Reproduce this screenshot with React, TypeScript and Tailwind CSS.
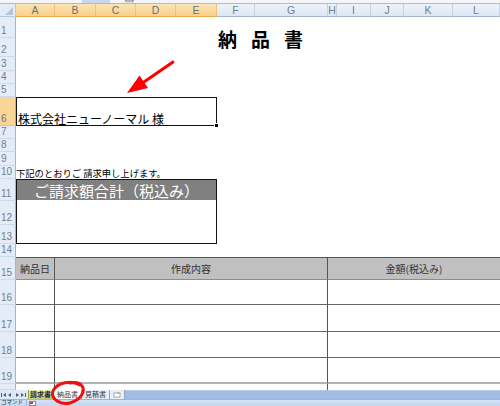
import React from "react";

const jp = "font-['Noto_Sans_CJK_JP','Noto_Sans_CJK_SC',sans-serif]";

const columns = [
  { label: "A", width: "w-[39px]", selected: true },
  { label: "B", width: "w-[41px]", selected: true },
  { label: "C", width: "w-[40px]", selected: true },
  { label: "D", width: "w-[40px]", selected: true },
  { label: "E", width: "w-[41px]", selected: true },
  { label: "F", width: "w-[38px]" },
  { label: "G", width: "w-[73px]" },
  { label: "H", width: "w-[9px]" },
  { label: "I", width: "w-[34px]" },
  { label: "J", width: "w-[33px]" },
  { label: "K", width: "w-[49px]" },
  { label: "L", width: "w-[47px]" },
];

const rows = [
  { label: "1", height: "h-[21px]" },
  { label: "2", height: "h-[19px]" },
  { label: "3", height: "h-[14px]" },
  { label: "4", height: "h-[13px]" },
  { label: "5", height: "h-[13px]" },
  { label: "6", height: "h-[29px]", selected: true },
  { label: "7", height: "h-[13px]" },
  { label: "8", height: "h-[13px]" },
  { label: "9", height: "h-[14px]" },
  { label: "10", height: "h-[13px]" },
  { label: "11", height: "h-[22px]" },
  { label: "12", height: "h-[24px]" },
  { label: "13", height: "h-[19px]" },
  { label: "14", height: "h-[13px]" },
  { label: "15", height: "h-[23px]" },
  { label: "16", height: "h-[25px]" },
  { label: "17", height: "h-[27px]" },
  { label: "18", height: "h-[26px]" },
  { label: "19", height: "h-[26px]" },
  { label: "", height: "h-[6px]" },
];

// table body rows 16..20
const tableRows = [
  { row: "row-start-16", line: "border-b border-b-[#666]" },
  { row: "row-start-17", line: "border-b border-b-[#666]" },
  { row: "row-start-18", line: "border-b border-b-[#666]" },
  { row: "row-start-19", line: "border-b-2 border-b-[#b3b3b3]" },
  { row: "row-start-20", line: "" },
];

function ColumnHeaders() {
  return (
    <div className="flex h-[13px] font-['Liberation_Sans',sans-serif] text-[10.5px] leading-none">
      <div className="relative w-[16px] border-r border-b border-[#b7c8dd] bg-[#e4ecf7]">
        <svg className="absolute inset-0" width="16" height="13" viewBox="0 0 16 13">
          <polygon points="13,3 13,11 5,11" fill="#b3c5db" />
        </svg>
      </div>
      {columns.map((c) => (
        <div
          key={c.label}
          className={
            c.width +
            " flex items-center justify-center overflow-hidden border-r border-b " +
            (c.selected
              ? "border-r-[#eec27e] border-b-[#eaa94a] bg-linear-to-b from-[#fbe4b6] to-[#f8d08a] text-[#6b6f78]"
              : "border-r-[#c3d2e4] border-b-[#9eb6ce] bg-linear-to-b from-[#eef3fa] to-[#dde6f2] text-[#6e7f96]")
          }
        >
          {c.label}
        </div>
      ))}
    </div>
  );
}

function RowHeaders() {
  return (
    <div className="flex w-[16px] flex-col font-['Liberation_Sans',sans-serif] text-[10px] leading-none">
      {rows.map((r, i) => (
        <div
          key={i}
          className={
            r.height +
            " flex items-end overflow-hidden border-r border-b pl-[1px] pb-[1px] " +
            (r.selected
              ? "border-r-[#eaa94a] border-b-[#eec27e] bg-[#f9d697] text-[#6b6f78]"
              : "border-r-[#9eb6ce] border-b-[#cfdbea] bg-[#e4ecf7] text-[#6e7f96]")
          }
        >
          {r.label}
        </div>
      ))}
    </div>
  );
}

function Sheet() {
  return (
    <div
      className={
        jp +
        " grid flex-1 grid-cols-[39px_41px_40px_40px_41px_38px_73px_9px_34px_33px_49px_47px] grid-rows-[21px_19px_14px_13px_13px_29px_13px_13px_14px_13px_22px_24px_19px_13px_23px_25px_27px_26px_26px_6px] bg-white text-black"
      }
    >
      {/* title */}
      <div className="col-span-12 col-start-1 row-span-2 row-start-1 flex gap-[14px] pl-[202px] pt-[12px] text-[19px] font-bold leading-none">
        <span>納</span>
        <span>品</span>
        <span>書</span>
      </div>

      {/* addressee */}
      <div className="relative col-span-5 col-start-1 row-start-6 flex items-end whitespace-nowrap border-[1.5px] border-[#111] pl-[1px] text-[12px] leading-none">
        株式会社ニューノーマル 様
        <span className="absolute -right-[3px] -bottom-[3px] h-[5px] w-[5px] border border-white bg-black" />
      </div>

      <div className="col-span-12 col-start-1 row-start-10 flex items-end whitespace-nowrap pb-[1px] text-[9.3px] leading-none">
        下記のとおりご 請求申し上げます。
      </div>

      {/* total box */}
      <div className="col-span-5 col-start-1 row-span-3 row-start-11 flex flex-col border-[1.5px] border-[#111]">
        <div className="flex h-[20px] items-center justify-center bg-[#808080] text-[15px] leading-none text-white">
          ご請求額合計（税込み）
        </div>
      </div>

      {/* table header */}
      <div className="col-start-1 row-start-15 flex items-center justify-center border-y border-r border-t-[#555] border-b-[#8c8c8c] border-r-[#555] bg-[#c0c0c0] text-[10px] leading-none text-[#333]">
        納品日
      </div>
      <div className="col-span-6 col-start-2 row-start-15 flex items-center justify-center border-y border-r border-t-[#555] border-b-[#8c8c8c] border-r-[#555] bg-[#c0c0c0] text-[10px] leading-none text-[#333]">
        作成内容
      </div>
      <div className="col-span-5 col-start-8 row-start-15 flex items-center justify-center border-y border-t-[#555] border-b-[#8c8c8c] bg-[#c0c0c0] text-[10px] leading-none text-[#333]">
        金額(税込み)
      </div>

      {tableRows.map((t) => (
        <React.Fragment key={t.row}>
          <div className={t.row + " col-start-1 border-r border-r-[#555] " + t.line} />
          <div className={t.row + " col-span-6 col-start-2 border-r border-r-[#555] " + t.line} />
          <div className={t.row + " col-span-5 col-start-8 " + t.line} />
        </React.Fragment>
      ))}
    </div>
  );
}

function SheetTabs() {
  return (
    <div className={jp + " flex h-[9px] whitespace-nowrap text-[7px] leading-none"}>
      <div className="flex w-[28px] items-center bg-[#dfe8f5]">
        <svg width="28" height="9" viewBox="0 0 28 9">
          <rect x="1" y="3" width="1" height="4" fill="#44608a" />
          <polygon points="6,3 6,7 3,5" fill="#44608a" />
          <polygon points="11,3 11,7 8,5" fill="#44608a" />
          <polygon points="16,3 16,7 19,5" fill="#44608a" />
          <polygon points="21,3 21,7 24,5" fill="#44608a" />
          <rect x="25" y="3" width="1" height="4" fill="#44608a" />
        </svg>
      </div>
      <div className="flex w-[25px] items-center border-r border-[#9eb6ce] bg-linear-to-b from-[#e8efb8] to-[#c2d37f] font-bold text-[#223]">
        <span className="mr-[1px] h-full w-[1px] bg-[#8aab3a]" />
        請求書
      </div>
      <div className="flex w-[29px] items-center justify-center border-x border-[#7a96bd] bg-white text-[#333]">
        納品書
      </div>
      <div className="flex w-[28px] items-center justify-center border-r border-[#8ea7c9] bg-[#e6eef9] text-[#333]">
        見積書
      </div>
      <div className="flex w-[15px] items-center justify-center border-r border-[#8ea7c9] bg-[#e6eef9]">
        <svg width="8" height="6" viewBox="0 0 8 6">
          <rect x="1" y="1" width="6" height="4" fill="#fff" stroke="#8a98a8" strokeWidth="0.8" />
          <rect x="4" y="0" width="3" height="2" fill="#f2b233" />
        </svg>
      </div>
      <div className="flex-1 border-t border-[#b5c9e6] bg-[#a1bce2]" />
    </div>
  );
}

function StatusBar() {
  return (
    <div className={jp + " flex h-[7px] items-center overflow-hidden border-t border-[#9db6d8] bg-linear-to-b from-[#d4e2f4] to-[#c3d6ef] text-[5.5px] leading-none text-[#1f2f46]"}>
      <span className="pl-[1px]">コマンド</span>
      <span className="ml-[3px] h-full w-[1px] bg-[#9db6d8]" />
      <span className="ml-[2px] h-[5px] w-[7px] border border-[#7a8ea8] bg-white">
        <span className="block h-[2px] w-[3px] bg-[#d23a2a]" />
      </span>
    </div>
  );
}

export default function App() {
  return (
    <div className="relative h-[406px] w-[500px] overflow-hidden bg-white">
      {/* top edge of the formula bar */}
      <div className={jp + " flex h-[4px] items-center overflow-hidden border-b border-[#aabdd6] bg-[#f3f5f8]"}>
        <div className="ml-[82px] h-full w-[28px] bg-[#c8d8ee]" />
        <span className="ml-[15px] text-[3px] leading-none text-[#444]">納品書</span>
      </div>

      <ColumnHeaders />

      <div className="flex h-[373px]">
        <RowHeaders />
        <Sheet />
      </div>

      <SheetTabs />
      <StatusBar />

      {/* red annotations drawn over the sheet */}
      <svg
        className="pointer-events-none absolute inset-0"
        width="500"
        height="406"
        viewBox="0 0 500 406"
      >
        <line x1="173" y1="62" x2="141" y2="84" stroke="#ff0000" strokeWidth="3" strokeLinecap="round" />
        <polygon points="127,93 139.5,75.5 148,88" fill="#ff0000" />
        <path
          d="M 80 385 C 72 380, 57 382, 53 391 C 50 400, 62 405, 70 403 C 80 400, 86 392, 82 386 C 80 383, 75 382, 70 383"
          fill="none"
          stroke="#ee1111"
          strokeWidth="3"
          strokeLinecap="round"
        />
      </svg>
    </div>
  );
}
